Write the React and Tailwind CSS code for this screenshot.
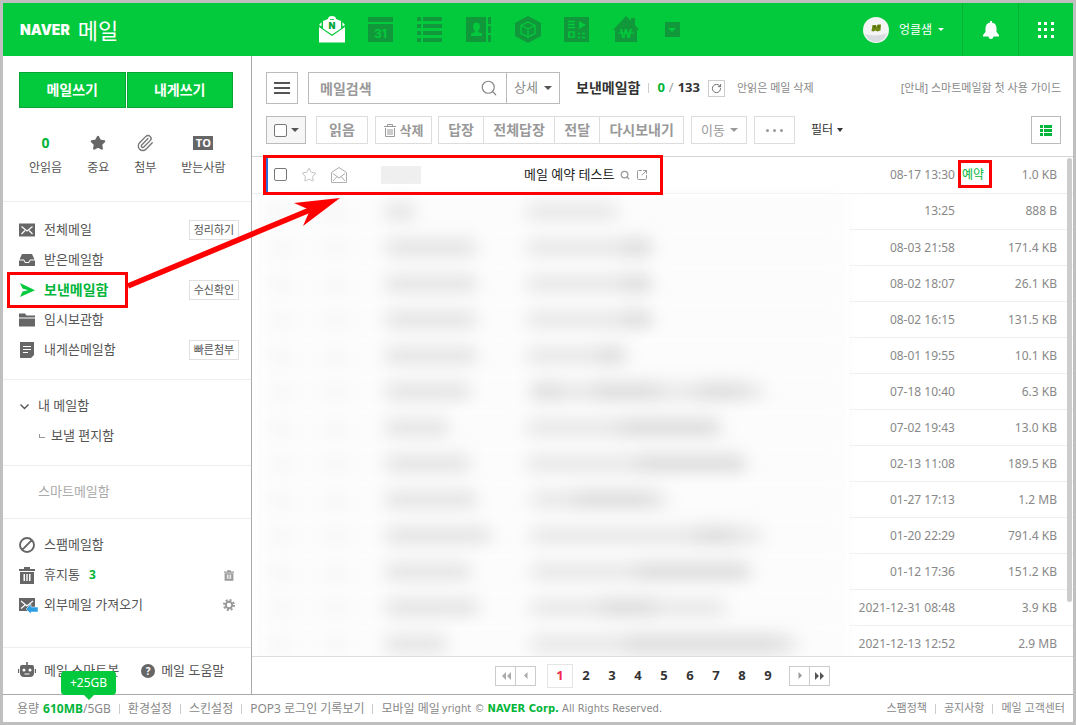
import { Paperclip, RotateCw, Search, SquareArrowOutUpRight, Star } from "lucide-react";

const QUICK_FILTERS = [
  { name: "안읽음", icon: <span className="text-sm font-bold text-[#03b53a] font-['Open_Sans']">0</span> },
  { name: "중요", icon: <Star className="size-4 fill-[#666] text-[#666]" /> },
  { name: "첨부", icon: <Paperclip className="size-[18px] text-[#777]" strokeWidth={1.8} /> },
  { name: "받는사람", icon: <span className="h-[14px] w-5 bg-[#666] text-center text-[11px] leading-[14px] font-bold text-white font-['Open_Sans']">TO</span> },
];

const FOLDERS = [
  { name: "전체메일", icon: "all", action: "정리하기" },
  { name: "받은메일함", icon: "inbox" },
  { name: "보낸메일함", icon: "sent", action: "수신확인", active: true },
  { name: "임시보관함", icon: "folder" },
  { name: "내게쓴메일함", icon: "note", action: "빠른첨부" },
];

const REPLY_ACTIONS = ["답장", "전체답장", "전달", "다시보내기"];

// sender: blurred width, subject: [offset, width, strong] pieces
const MAILS = [
  { date: "13:25", size: "888 B", sender: 28, subject: [[0, 90]] },
  { date: "08-03 21:58", size: "171.4 KB", sender: 90, subject: [[0, 120], [96, 28, true]] },
  { date: "08-02 18:07", size: "26.1 KB", sender: 90, subject: [[0, 120], [96, 28, true]] },
  { date: "08-02 16:15", size: "131.5 KB", sender: 90, subject: [[0, 120], [96, 28, true]] },
  { date: "08-01 19:55", size: "10.1 KB", sender: 90, subject: [[0, 96], [72, 26, true]] },
  { date: "07-18 10:40", size: "6.3 KB", sender: 84, subject: [[4, 232], [6, 28, true], [66, 66, true], [172, 44, true]] },
  { date: "07-02 19:43", size: "13.0 KB", sender: 62, subject: [[0, 194], [92, 98, true]] },
  { date: "02-13 11:08", size: "189.5 KB", sender: 84, subject: [[0, 218], [110, 108, true]] },
  { date: "01-27 17:13", size: "1.2 MB", sender: 90, subject: [[4, 136], [48, 76, true]] },
  { date: "01-20 22:29", size: "791.4 KB", sender: 104, subject: [[4, 230], [168, 40, true]] },
  { date: "01-12 17:36", size: "151.2 KB", sender: 84, subject: [[4, 220], [110, 110, true]] },
  { date: "2021-12-31 08:48", size: "3.9 KB", sender: 92, subject: [[4, 194], [74, 52, true]] },
  { date: "2021-12-13 12:52", size: "2.9 MB", sender: 60, subject: [[4, 266], [98, 156, true]] },
];

function Caret({ className }) {
  return (
    <svg viewBox="0 0 8 4" className={`h-1 w-2 shrink-0 ${className}`} fill="currentColor" aria-hidden="true">
      <path d="M0 0h8L4 4z" />
    </svg>
  );
}

function TrashIcon({ className }) {
  return (
    <svg viewBox="0 0 16 17" className={className} fill="currentColor" aria-hidden="true">
      <path d="M5 0h6v2h5v2H0V2h5zM1 5h14v12H1zm3.5 2v7H6V7zm2.8 0v7h1.4V7zM10 7v7h1.5V7z" fillRule="evenodd" />
    </svg>
  );
}

function TrashOutline() {
  return (
    <svg viewBox="0 0 12 13" className="h-[13px] w-3" fill="none" stroke="currentColor" aria-hidden="true">
      <path d="M0 2.5h12M3.5 2V.5h5V2M1.5 4v8.5h9V4M4 5v6M6 5v6M8 5v6" />
    </svg>
  );
}

function FolderIcon({ name }) {
  return (
    <svg viewBox="0 0 16 16" className="size-4 overflow-visible" fill="currentColor" aria-hidden="true">
      {name === "all" && (
        <>
          <path d="M0 1.500h16v13H0z" />
          <path d="M2.500 4.500l5.500 4.500 5.500-4.500M2.500 12l3.500-3.500M13.500 12L10 8.500" fill="none" stroke="#fff" strokeWidth="1.200" />
        </>
      )}
      {name === "inbox" && <path d="M3 2h10l2.500 5.500H11L9.500 10h-3L5 7.500H.5zM0 8.500h4.500L6 11h4l1.500-2.500H16V14H0z" />}
      {name === "sent" && <path d="M1 1l15 7.200L1 15l2.500-5.500L9 8.200 3.500 6.500z" />}
      {name === "folder" && <path d="M0 1.500h6l1.500 2H16v2H0zM0 6.500h16v8H0z" />}
      {name === "note" && (
        <>
          <path d="M1 0h14v13l-3 3H1z" />
          <path d="M4 4.500h8M4 7.500h8M4 10.500h5" stroke="#fff" strokeWidth="1.200" />
        </>
      )}
      {name === "spam" && <path d="M8 1a7 7 0 1 0 0 14A7 7 0 0 0 8 1zM3.200 12.800l9.600-9.600" fill="none" stroke="currentColor" strokeWidth="1.900" />}
      {name === "external" && (
        <>
          <path d="M0 1h16v13H0z" />
          <path d="M2 4l6 5 6-5M2 11.500L6 8" fill="none" stroke="#fff" strokeWidth="1.200" />
          <path d="M7 12l5-5v3h7v5h-7v2z" fill="#2b9fe0" stroke="#fff" strokeWidth=".5" />
        </>
      )}
      {name === "bot" && (
        <path d="M7.200-1h1.600v3H13a2 2 0 0 1 2 2v6a4 4 0 0 1-4 4H5a4 4 0 0 1-4-4V4a2 2 0 0 1 2-2h4.200zM-1 6H.2v4H-1zM15.800 6H17v4h-1.200zM5 5.500a1.500 1.500 0 1 0 0 3 1.500 1.500 0 0 0 0-3zm6 0a1.500 1.500 0 1 0 0 3 1.500 1.500 0 0 0 0-3zM5.500 10.500v1h5v-1z" fillRule="evenodd" />
      )}
    </svg>
  );
}

function ServiceIcon({ name }) {
  return (
    <svg viewBox="0 0 26 27" className="h-[27px] w-[26px]" fill="currentColor" aria-hidden="true">
      {name === "메일" && (
        <g fill="#fff">
          <path d="M0 11l13 9 13-9v15.500H0z" />
          <path d="M4 5l5-2a4 3 0 0 1 8 0l5 2v7.500l-9 6-9-6z" />
          <path d="M0 9l2.500-3v4.500zM26 9l-2.500-3v4.500z" />
          <path d="M11 3.500h4" stroke="#03c93c" strokeWidth=".8" />
          <text x="13" y="13" textAnchor="middle" className="fill-[#03a636] text-[9px] font-black font-['Inter']">N</text>
        </g>
      )}
      {name === "캘린더" && (
        <>
          <path d="M0 1h25v5H0zM0 8h25v18H0z" />
          <text x="12.500" y="21.500" textAnchor="middle" className="fill-[#03c93c] text-xs font-bold font-['Inter']">31</text>
        </>
      )}
      {name === "메모" && <path d="M0 1h4v4H0zM6 1h19v4H6zM0 8h4v4H0zM6 8h19v4H6zM0 15h4v4H0zM6 15h19v4H6zM0 22h4v4H0zM6 22h19v4H6z" />}
      {name === "주소록" && (
        <>
          <path d="M0 1h20v25H0zM22 1h3v7h-3zM22 10h3v7h-3zM22 19h3v7h-3z" />
          <path d="M10.500 6.500c2.500 0 3.500 2 3.500 4s-1 3.500-2 4.500v1l4 1.500V20H5v-2.500L9 16v-1c-1-1-2-2.500-2-4.500s1-4 3.500-4z" fill="#03c93c" />
        </>
      )}
      {name === "클라우드" && (
        <>
          <path d="M13 0l13 7v13l-13 7-13-7V7z" />
          <path d="M13 6l7 3.500v8L13 21l-7-3.500v-8zM6 9.500l7 3.500 7-3.500M13 13v8" fill="none" stroke="#03c93c" strokeWidth="1.300" />
        </>
      )}
      {name === "뉴스" && (
        <>
          <path d="M0 1h25v25H0z" />
          <path d="M4 5.500h7M4 8.500h7M4 11.500h7M14 17.500h2M18 17.500h3M14 21.500h2M18 21.500h3M5 16h5v5H5z" fill="none" stroke="#03c93c" strokeWidth="1.700" />
          <path d="M15 5l7 4-7 4z" fill="#03c93c" />
        </>
      )}
      {name === "가계부" && (
        <>
          <path d="M13 0l5 5V2h4v7l4 5h-2v12H2V14H0z" />
          <text x="13" y="21.500" textAnchor="middle" className="fill-[#03c93c] text-xs font-bold font-['Inter']">W</text>
          <path d="M5 17h16" stroke="#03c93c" />
        </>
      )}
    </svg>
  );
}

function Header() {
  const services = ["메일", "캘린더", "메모", "주소록", "클라우드", "뉴스", "가계부"];

  return (
    <header className="flex h-[53px] shrink-0 items-center bg-[#03c93c] text-white">
      <h1 className="flex w-[316px] shrink-0 items-center gap-2 pl-[17px]">
        <span className="text-sm font-black font-['Inter']">NAVER</span>
        <span className="text-[22px] leading-6">메일</span>
      </h1>
      <nav className="flex items-center gap-[23px] text-[#11983a]">
        {services.map((name) => (
          <a key={name} href="#" aria-label={name}><ServiceIcon name={name} /></a>
        ))}
        <button aria-label="더보기" className="flex w-5 justify-center">
          <span className="flex size-[15px] items-center justify-center bg-[#11983a]">
            <Caret className="text-[#03c93c]" />
          </span>
        </button>
      </nav>
      <div className="ml-auto flex h-full items-center">
        <button className="mr-[18px] flex items-center text-xs">
          <svg viewBox="0 0 26 26" className="mr-2.5 size-[26px]" aria-hidden="true">
            <circle cx="13" cy="13" r="13" fill="#f4f4f4" />
            <path d="M2 17c6 2 16 2 22-1-2 6-6 9-11 9s-9-3-11-8z" fill="#d8dce0" />
            <path d="M8.500 14l1-6h3.500l.5 2 1-2.500h3.500l-.5 6-3 1-2-1-2 1z" fill="#6d8712" />
            <path d="M11 9h1.500v2H11zM15 8.500h1.500v2H15z" fill="#4b650b" />
          </svg>
          엉클샘
          <svg viewBox="0 0 6 3" className="ml-1.5 h-[3px] w-1.5" fill="currentColor" aria-hidden="true"><path d="M0 0h6L3 3z" /></svg>
        </button>
        <button aria-label="알림" className="flex h-full w-14 items-center justify-center border-l border-[#03b236]">
          <svg viewBox="0 0 16 18" className="h-[18px] w-4" fill="currentColor" aria-hidden="true">
            <path d="M7 0h2v1.500c3 .5 4.500 3 4.500 5.500v4l2.500 3v1.500H0V14l2.500-3V7C2.500 4.500 4 2 7 1.500zM5.500 15h5c0 2-1 3-2.500 3s-2.500-1-2.500-3z" />
          </svg>
        </button>
        <button aria-label="전체 서비스" className="flex h-full w-[55px] items-center justify-center border-l border-[#03b236]">
          <svg viewBox="0 0 16 16" className="size-4" fill="currentColor" aria-hidden="true">
            <path d="M0 0h3v3H0zM6 0h3v3H6zM13 0h3v3h-3zM0 6h3v3H0zM6 6h3v3H6zM13 6h3v3h-3zM0 13h3v3H0zM6 13h3v3H6zM13 13h3v3h-3z" />
          </svg>
        </button>
      </div>
    </header>
  );
}

function FolderRow({ icon, name, active, children }) {
  return (
    <li className="flex h-[30px] items-center">
      <a href="#" className={active ? "flex items-center gap-2 text-sm font-bold text-[#03b53a]" : "flex items-center gap-2 text-[13px]"}>
        <span className={active ? "mr-px text-[#03c93c]" : "mr-px text-[#666]"}><FolderIcon name={icon} /></span>
        {name}
      </a>
      {children}
    </li>
  );
}

function Sidebar() {
  return (
    <aside className="flex w-[249px] shrink-0 flex-col border-r border-[#aaa] text-[#555]">
      <div className="h-[146px] shrink-0 border-b border-[#eee] pt-4">
        <div className="grid grid-cols-2 gap-px pr-[18px] pl-4 text-sm font-bold text-white">
          <button className="h-9 border border-[#0aa336] bg-[#03c93c]">메일쓰기</button>
          <button className="h-9 border border-[#0aa336] bg-[#03c93c]">내게쓰기</button>
        </div>
        <ul className="mt-6 flex gap-[25px] pl-[26px] text-xs">
          {QUICK_FILTERS.map((item) => (
            <li key={item.name}>
              <a href="#" className="flex flex-col items-center gap-1.5">
                <span className="flex h-[22px] items-center">{item.icon}</span>
                {item.name}
              </a>
            </li>
          ))}
        </ul>
      </div>

      <ul className="h-[178px] shrink-0 border-b border-[#eee] pt-[13px] pr-3 pl-4">
        {FOLDERS.map((f) => (
          <FolderRow key={f.name} icon={f.icon} name={f.name} active={f.active}>
            {f.action && (
              <button className="ml-auto h-5 w-[50px] border border-[#e0e0e0] bg-white text-[11px] leading-4">{f.action}</button>
            )}
          </FolderRow>
        ))}
      </ul>

      <div className="h-[86px] shrink-0 border-b border-[#eee] pt-[11px] pl-4 text-[13px]">
        <a href="#" className="flex h-[30px] items-center gap-2">
          <svg viewBox="0 0 11 11" className="size-[11px]" fill="none" stroke="currentColor" strokeWidth="1.400" aria-hidden="true"><path d="M1.500 3.500l4 4 4-4" /></svg>
          내 메일함
        </a>
        <a href="#" className="flex h-[30px] items-center gap-1.5 pl-5">
          <span className="h-1 w-1.5 border-b border-l border-[#999]" />
          보낼 편지함
        </a>
      </div>

      <a href="#" className="flex h-[53px] shrink-0 items-center border-b border-[#eee] pl-[35px] text-[13px] text-[#aaa]">스마트메일함</a>

      <ul className="grow border-b border-[#eee] pt-[11px] pr-4 pl-4">
        <FolderRow icon="spam" name="스팸메일함" />
        <li className="flex h-[30px] items-center text-[13px]">
          <a href="#" className="flex items-center gap-[9px]">
            <TrashIcon className="h-[17px] w-4 text-[#666]" />
            휴지통
            <b className="text-xs text-[#03b53a] font-['Open_Sans']">3</b>
          </a>
          <button aria-label="휴지통 비우기" className="ml-auto pr-px"><TrashIcon className="h-[11px] w-2.5 text-[#999]" /></button>
        </li>
        <FolderRow icon="external" name="외부메일 가져오기">
          <button aria-label="외부메일 설정" className="ml-auto">
            <svg viewBox="0 0 12 12" className="size-3" aria-hidden="true">
              <circle cx="6" cy="6" r="5" fill="none" stroke="#999" strokeWidth="2" strokeDasharray="2 1.920" />
              <circle cx="6" cy="6" r="3.200" fill="none" stroke="#999" strokeWidth="2" />
            </svg>
          </button>
        </FolderRow>
      </ul>

      <div className="flex h-[46px] shrink-0 items-center gap-[22px] pl-4 text-[13px]">
        <a href="#" className="flex items-center gap-[9px]">
          <span className="text-[#666]"><FolderIcon name="bot" /></span>
          메일 스마트봇
        </a>
        <a href="#" className="flex items-center gap-1.5">
          <span className="size-[14px] rounded-full bg-[#666] text-center text-[10px] leading-[14px] font-bold text-white font-['Open_Sans']">?</span>
          메일 도움말
        </a>
      </div>
    </aside>
  );
}

function SearchBar() {
  return (
    <div className="flex shrink-0 items-center pt-4 pr-3 pb-3 pl-[14px]">
      <button aria-label="메뉴" className="flex size-8 shrink-0 flex-col items-center justify-center gap-[3px] border border-[#bbb]">
        <span className="h-0.5 w-4 bg-[#555]" />
        <span className="h-0.5 w-4 bg-[#555]" />
        <span className="h-0.5 w-4 bg-[#555]" />
      </button>
      <form className="ml-2.5 flex h-8 w-[252px] shrink-0 items-center border border-[#bbb]">
        <input
          type="text"
          aria-label="메일검색"
          placeholder="메일검색"
          className="h-full min-w-0 flex-1 pl-[11px] text-sm font-bold text-[#555] outline-none placeholder:text-[#999]"
        />
        <button type="button" aria-label="검색" className="mr-2">
          <Search className="size-[18px] text-[#888]" strokeWidth={1.6} />
        </button>
        <button type="button" className="flex h-full w-[53px] items-center justify-center gap-1.5 border-l border-[#bbb] text-[13px] text-[#888]">
          상세 <Caret className="text-[#555]" />
        </button>
      </form>
      <h2 className="ml-4 shrink-0 text-sm font-bold text-[#333]">보낸메일함</h2>
      <span className="mx-2 h-2.5 w-px bg-[#ccc]" />
      <p className="flex shrink-0 gap-1 text-[13px] font-bold text-[#333] font-['Open_Sans']">
        <span className="text-[#03b53a]">0</span>
        <span className="font-normal text-[#999]">/</span>
        <span>133</span>
      </p>
      <button aria-label="새로고침" className="ml-2 flex size-[17px] shrink-0 items-center justify-center border border-[#ccc]">
        <RotateCw className="size-[11px] text-[#666]" />
      </button>
      <a href="#" className="ml-3 shrink-0 text-[11px] text-[#888]">안읽은 메일 삭제</a>
      <a href="#" className="ml-auto shrink-0 text-[11px] text-[#888]">[안내] 스마트메일함 첫 사용 가이드</a>
    </div>
  );
}

function CheckBox({ label }) {
  return <input type="checkbox" aria-label={label} className="size-[13px] shrink-0 appearance-none rounded-[2px] border border-[#767676] bg-white" />;
}

function Toolbar() {
  return (
    <div className="flex h-[41px] shrink-0 items-start border-b border-[#d5d5d5] pr-3 pl-[14px] text-sm font-bold text-[#999]">
      <div className="flex h-7 w-10 items-center justify-center gap-1 border border-[#bbb] bg-[#f6f6f6]">
        <CheckBox label="전체 선택" />
        <Caret className="text-[#555]" />
      </div>
      <button className="ml-2.5 h-7 w-[52px] border border-[#ddd]">읽음</button>
      <button className="ml-[7px] flex h-7 w-[57px] items-center justify-center gap-1 border border-[#ddd] text-[13px]"><TrashOutline />삭제</button>
      <div className="ml-1.5 flex h-7 w-[246px] divide-x divide-[#ddd] border border-[#ddd]">
        {REPLY_ACTIONS.map((name) => (
          <button key={name} className="flex-auto">{name}</button>
        ))}
      </div>
      <div className="relative ml-[7px]">
        <select aria-label="이동" className="h-7 w-14 appearance-none border border-[#ddd] pl-[9px] text-[13px] font-normal">
          <option>이동</option>
        </select>
        <Caret className="pointer-events-none absolute top-3 right-[9px]" />
      </div>
      <button aria-label="더보기" className="ml-[7px] flex h-7 w-[41px] items-center justify-center gap-1 border border-[#ddd]">
        <i className="size-[3px] rounded-full bg-[#999]" />
        <i className="size-[3px] rounded-full bg-[#999]" />
        <i className="size-[3px] rounded-full bg-[#999]" />
      </button>
      <div className="relative ml-4 text-[#333]">
        <select aria-label="필터" className="h-7 w-9 appearance-none text-xs font-normal">
          <option>필터</option>
        </select>
        <svg viewBox="0 0 6 4" className="pointer-events-none absolute top-3 right-1 h-1 w-1.5" fill="currentColor" aria-hidden="true"><path d="M0 0h6L3 4z" /></svg>
      </div>
      <button aria-label="목록 보기" className="ml-auto flex h-7 w-[30px] items-center justify-center border border-[#bbb]">
        <svg viewBox="0 0 12 11" className="h-[11px] w-3" fill="#03b53a" aria-hidden="true">
          <path d="M0 0h3v3H0zM4 0h8v3H4zM0 4h3v3H0zM4 4h8v3H4zM0 8h3v3H0zM4 8h8v3H4z" />
        </svg>
      </button>
    </div>
  );
}

function BlurredContent({ mail }) {
  return (
    <div className="flex h-9 items-center bg-[#fcfcfc] blur-[9px]">
      <span className="ml-2 h-4 w-5 bg-[#f5f5f5]" />
      <span className="ml-9 h-4 w-5 bg-[#f5f5f5]" />
      <span className="ml-10 w-[141px]">
        <span className="block h-5 bg-[#e4e4e4]" style={{ width: mail.sender }} />
      </span>
      <span className="relative h-5 flex-1">
        {mail.subject.map(([left, width, strong], i) => (
          <span
            key={i}
            className={strong ? "absolute inset-y-0 bg-[#dcdcdc]" : "absolute inset-y-0 bg-[#e8e8e8]"}
            style={{ left, width }}
          />
        ))}
      </span>
    </div>
  );
}

function MailList() {
  return (
    <div className="relative min-h-0 flex-1 overflow-hidden">
      <table className="w-full table-fixed border-collapse text-xs text-[#888]">
        <colgroup>
          <col />
          <col className="w-[106px]" />
          <col className="w-9" />
          <col className="w-[82px]" />
        </colgroup>
        <tbody>
          <tr className="h-9 border-b border-[#eee]">
            <td className="p-0">
              <div className="flex items-center pl-[22px]">
                <CheckBox label="메일 선택" />
                <Star className="ml-[14px] size-4 text-[#bbb]" strokeWidth={1.4} />
                <svg viewBox="0 0 16 16" className="ml-[14px] size-4" fill="none" stroke="#aaa" aria-hidden="true">
                  <path d="M.5 5.500L8 .5l7.500 5v10H.5zM2 6.500l6 4.500 6-4.500M2 14l4-4.500M14 14l-4-4.500" />
                </svg>
                <span className="ml-[34px] h-[18px] w-10 bg-[#efefef]" />
                <a href="#" className="ml-[103px] text-[13px] text-[#222]">메일 예약 테스트</a>
                <Search className="ml-1.5 size-2.5 text-[#999]" strokeWidth={3} />
                <SquareArrowOutUpRight className="ml-1.5 size-3 text-[#999]" />
              </div>
            </td>
            <td className="p-0 text-right">08-17 13:30</td>
            <td className="p-0 pl-[7px] text-left text-[#03b53a]">예약</td>
            <td className="p-0 pr-4 text-right">1.0 KB</td>
          </tr>
          {MAILS.map((mail) => (
            <tr key={mail.date} className="h-9">
              <td className="p-0 pl-2.5"><BlurredContent mail={mail} /></td>
              <td className="border-b border-[#eee] p-0 text-right">{mail.date}</td>
              <td className="border-b border-[#eee] p-0" />
              <td className="border-b border-[#eee] p-0 pr-4 text-right">{mail.size}</td>
            </tr>
          ))}
        </tbody>
      </table>
      <div className="absolute top-px right-px h-[444px] w-[5px] rounded-full bg-[#ccc]" />
    </div>
  );
}

function PageArrow({ label, d, className }) {
  return (
    <button aria-label={label} className={`flex h-5 w-[21px] items-center justify-center border border-[#ccc] ${className}`}>
      <svg viewBox="0 0 10 8" className="h-2 w-2.5" fill="currentColor" aria-hidden="true"><path d={d} /></svg>
    </button>
  );
}

function Pager() {
  return (
    <nav className="flex h-[38px] shrink-0 items-center justify-center border-t border-[#ddd] text-[13px] font-bold text-[#333] font-['Open_Sans']">
      <PageArrow label="처음" d="M5 0v8L1 4zM10 0v8L6 4z" className="text-[#aaa]" />
      <PageArrow label="이전" d="M6.500 0v7L3 3.500z" className="-ml-px text-[#aaa]" />
      <span className="ml-[11px] flex h-6 w-[26px] items-center justify-center border border-[#e5e5e5] text-[#f5274f]">1</span>
      {[2, 3, 4, 5, 6, 7, 8, 9].map((n) => (
        <a key={n} href="#" className="w-[26px] text-center">{n}</a>
      ))}
      <PageArrow label="다음" d="M3.500 0v7L7 3.500z" className="ml-2 text-[#999]" />
      <PageArrow label="마지막" d="M0 0v8l4-4zM5 0v8l4-4z" className="-ml-px text-[#555]" />
    </nav>
  );
}

function Bar() {
  return <span className="mx-2 h-2.5 w-px bg-[#ccc]" />;
}

function Footer() {
  return (
    <footer className="flex h-7 shrink-0 items-center border-t border-[#aaa] pr-2 pl-[14px] text-xs text-[#888]">
      <div className="relative flex">
        용량
        <b className="ml-1 text-[#03b53a]">610MB</b>
        <span>/5GB</span>
        <span className="absolute bottom-[22px] left-11 flex h-6 w-[55px] items-center justify-center rounded bg-[#03c93c] text-white">
          +25GB
          <i className="absolute top-6 border-x-5 border-t-5 border-x-transparent border-t-[#03c93c]" />
        </span>
      </div>
      <Bar />
      <a href="#">환경설정</a>
      <Bar />
      <a href="#">스킨설정</a>
      <Bar />
      <a href="#">POP3 로그인 기록보기</a>
      <Bar />
      <a href="#">모바일 메일</a>
      <p className="ml-0.5 text-[10px] font-['DejaVu_Sans']">
        yright © <b className="text-[#03b53a]">NAVER Corp.</b> All Rights Reserved.
      </p>
      <div className="ml-auto flex items-center text-[11px]">
        <a href="#">스팸정책</a>
        <Bar />
        <a href="#">공지사항</a>
        <Bar />
        <a href="#">메일 고객센터</a>
      </div>
    </footer>
  );
}

// Red boxes and the arrow that point out the reserved mail
function Annotations() {
  return (
    <div className="pointer-events-none absolute -inset-[3px]">
      <div className="absolute top-[272px] left-[7px] h-9 w-[121px] border-3 border-[#f00]" />
      <div className="absolute top-[155px] left-[263px] h-10 w-[400px] border-3 border-[#f00]">
        <div className="h-full w-0.5 bg-[#2a6fd6]" />
      </div>
      <div className="absolute top-[160px] left-[958px] h-7 w-[34px] border-3 border-[#f00]" />
      <svg viewBox="0 0 214 100" className="absolute top-[196px] left-[127px] h-[100px] w-[214px]" aria-hidden="true">
        <path d="M1 90L184 13.500" stroke="#f00" strokeWidth="5.500" />
        <path d="M213 2L167 7l16 7-7 16z" fill="#f00" />
      </svg>
    </div>
  );
}

export default function App() {
  return (
    <div className="relative flex h-screen flex-col border-3 border-[#bfbfbf] bg-white font-['Noto_Sans','Noto_Sans_CJK_KR',sans-serif]">
      <Header />
      <div className="flex min-h-0 flex-1">
        <Sidebar />
        <main className="flex min-w-0 flex-1 flex-col">
          <SearchBar />
          <Toolbar />
          <MailList />
          <Pager />
        </main>
      </div>
      <Footer />
      <Annotations />
    </div>
  );
}
